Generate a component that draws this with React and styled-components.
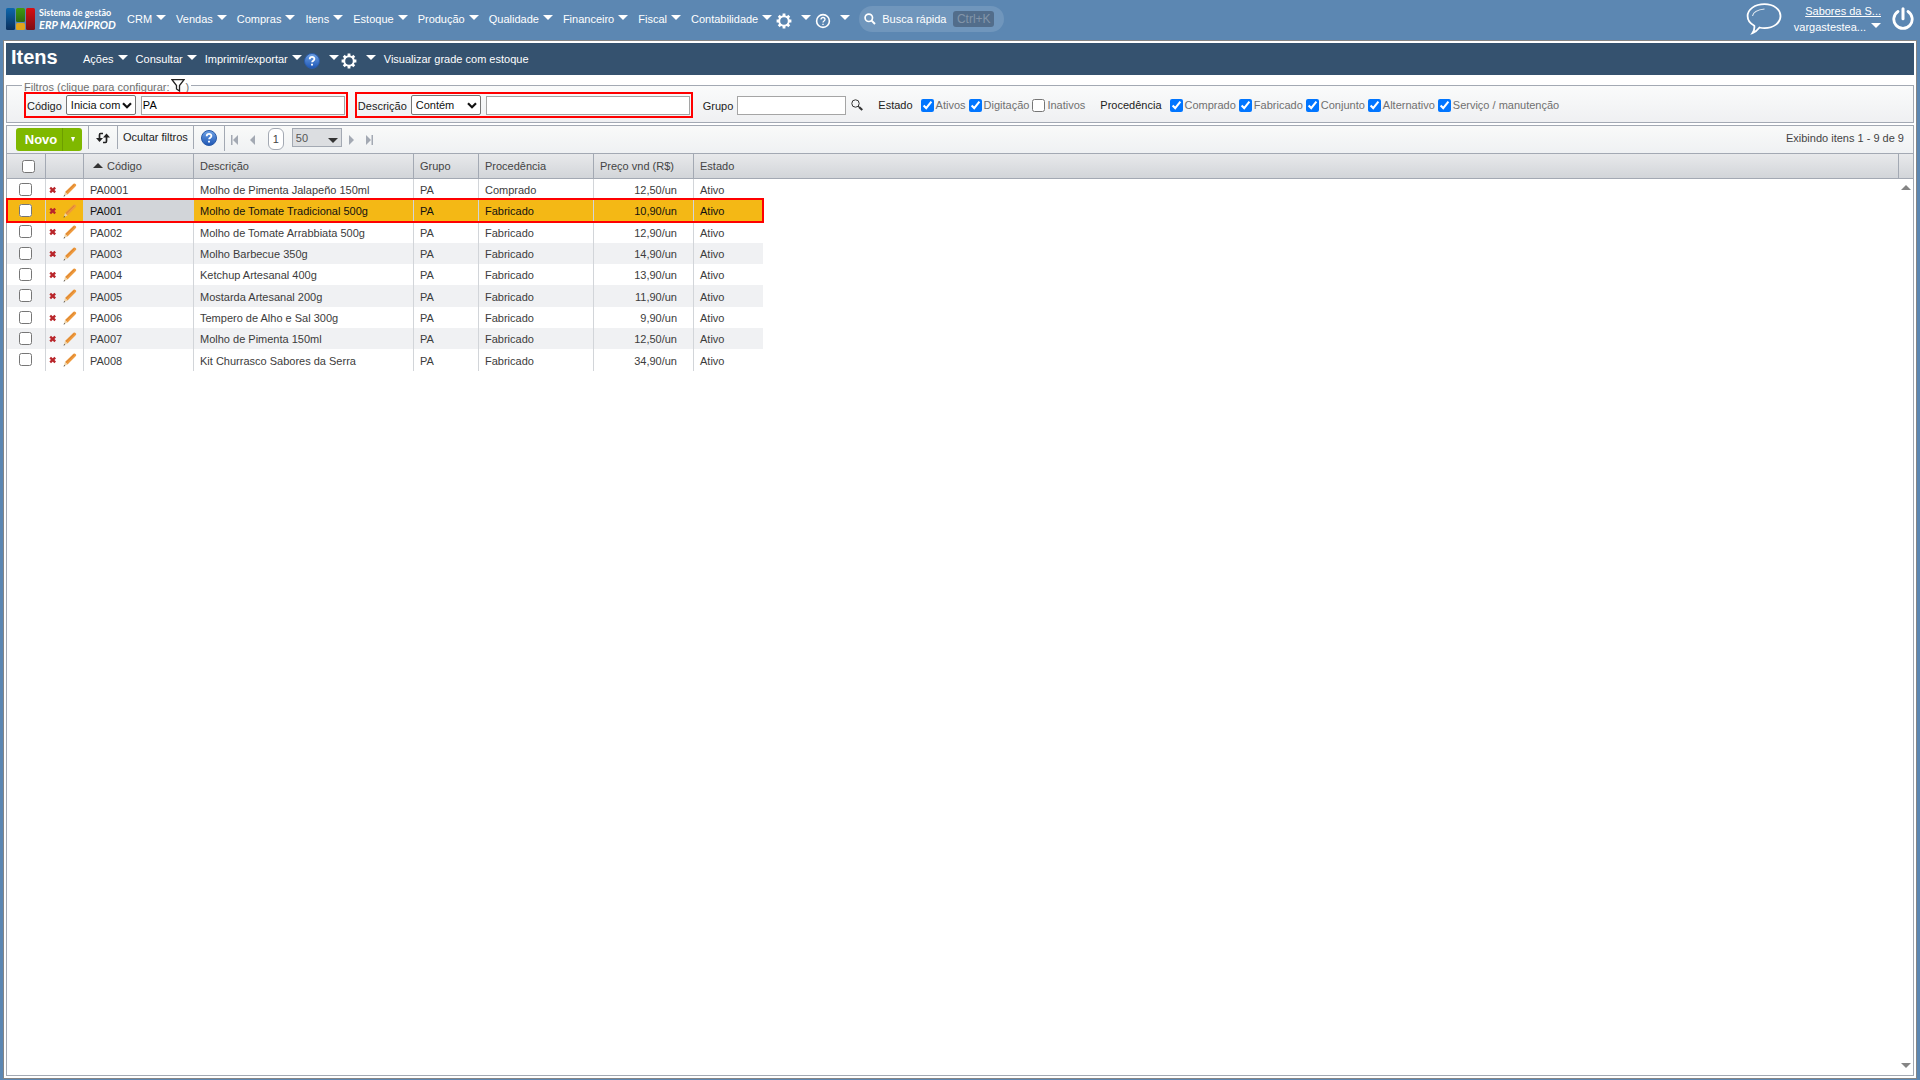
import React from 'react';
import styled, { createGlobalStyle, css } from 'styled-components';

const LINE = '#a3a9b3';

const MENU = [
  'CRM',
  'Vendas',
  'Compras',
  'Itens',
  'Estoque',
  'Produção',
  'Qualidade',
  'Financeiro',
  'Fiscal',
  'Contabilidade',
];

const ESTADOS = [
  ['Ativos', true],
  ['Digitação', true],
  ['Inativos', false],
];

const PROCEDENCIAS = [
  ['Comprado', true],
  ['Fabricado', true],
  ['Conjunto', true],
  ['Alternativo', true],
  ['Serviço / manutenção', true],
];

const ITENS = [
  ['PA0001', 'Molho de Pimenta Jalapeño 150ml', 'Comprado', '12,50/un'],
  ['PA001', 'Molho de Tomate Tradicional 500g', 'Fabricado', '10,90/un'],
  ['PA002', 'Molho de Tomate Arrabbiata 500g', 'Fabricado', '12,90/un'],
  ['PA003', 'Molho Barbecue 350g', 'Fabricado', '14,90/un'],
  ['PA004', 'Ketchup Artesanal 400g', 'Fabricado', '13,90/un'],
  ['PA005', 'Mostarda Artesanal 200g', 'Fabricado', '11,90/un'],
  ['PA006', 'Tempero de Alho e Sal 300g', 'Fabricado', '9,90/un'],
  ['PA007', 'Molho de Pimenta 150ml', 'Fabricado', '12,50/un'],
  ['PA008', 'Kit Churrasco Sabores da Serra', 'Fabricado', '34,90/un'],
];

const SELECTED = 'PA001';

const GearIcon = () => (
  <svg width="16" height="16" viewBox="0 0 16 16" aria-hidden="true">
    <g stroke="#fff" strokeWidth="2.8">
      {[0, 45, 90, 135].map((a) => (
        <path key={a} d="M8 .6v3M8 12.4v3" transform={`rotate(${a} 8 8)`} />
      ))}
    </g>
    <circle cx="8" cy="8" r="4.8" fill="none" stroke="#fff" strokeWidth="2" />
  </svg>
);

const RoundHelpIcon = () => (
  <svg width="16" height="16" viewBox="0 0 16 16" fill="none" stroke="#fff" aria-hidden="true">
    <circle cx="8" cy="8" r="6.4" strokeWidth="1.6" />
    <path d="M6 6.5c0-2.7 4-2.6 4 0 0 1.5-2 1.500-2 3" strokeWidth="1.3" />
    <path d="M8 10.7v1.4" strokeWidth="1.4" />
  </svg>
);

const BlueHelpIcon = () => (
  <svg width="16" height="16" viewBox="0 0 16 16" fill="none" aria-hidden="true">
    <defs>
      <linearGradient id="ajuda" x1="0" y1="0" x2="0" y2="1">
        <stop offset="0" stopColor="#6fa3e6" />
        <stop offset="1" stopColor="#1d55b4" />
      </linearGradient>
    </defs>
    <circle cx="8" cy="8" r="7.5" fill="url(#ajuda)" stroke="#2a5ba8" />
    <path d="M5.700 6.2c.1-3 4.700-2.900 4.700-.2 0 1.700-2.300 1.700-2.300 3.300" stroke="#fff" strokeWidth="1.8" />
    <path d="M8 10.7v1.900" stroke="#fff" strokeWidth="1.9" />
  </svg>
);

const SearchIcon = () => (
  <svg width="12" height="12" viewBox="0 0 12 12" fill="none" stroke="#fff" aria-hidden="true">
    <circle cx="4.8" cy="4.8" r="3.7" strokeWidth="1.7" />
    <path d="M7.600 7.600l3.400 3.400" strokeWidth="2" />
  </svg>
);

const LensIcon = () => (
  <svg width="12" height="12" viewBox="0 0 12 12" fill="none" stroke="#333" aria-hidden="true">
    <circle cx="4.5" cy="4.5" r="3.7" />
    <path d="M7 7l1.500 1.500" />
    <path d="M8 8l3.300 3" strokeWidth="2.2" />
  </svg>
);

const FunnelIcon = () => (
  <svg width="14" height="13" viewBox="0 0 14 13" fill="#fff" stroke="#222" aria-hidden="true">
    <path d="M1 .7h12L8.500 6.500V12L5.500 10V6.500z" strokeWidth="1.3" />
  </svg>
);

const ChevronIcon = () => (
  <svg width="10" height="7" viewBox="0 0 10 7" fill="none" stroke="#111" aria-hidden="true">
    <path d="M1 1.200l4 4 4-4" strokeWidth="2.2" />
  </svg>
);

const ChatIcon = () => (
  <svg width="36" height="32" viewBox="0 0 36 32" fill="none" stroke="#fff" aria-hidden="true">
    <path
      d="M18.500 1.200c9.200 0 16 5.200 16 11.900s-6.800 12-16 12c-2 0-3.400-.2-5-.6-2 2.600-4.300 4.700-7 5.600 1.500-2.200 2.200-4.500 1.800-7.300C4 20.600 1.600 17 1.600 13.100c0-6.700 7.200-11.900 16.900-11.900z"
      strokeWidth="1.8"
    />
    <path d="M6.500 13c.6-3.500 4.500-6.200 12-7" strokeWidth="1.2" opacity=".8" />
  </svg>
);

const PowerIcon = () => (
  <svg width="22" height="24" viewBox="0 0 22 24" fill="none" stroke="#fff" strokeLinecap="round" aria-hidden="true">
    <path d="M6 4.500A9.200 9.200 0 1 0 16 4.500" strokeWidth="2.8" />
    <path d="M11 1.700v10" strokeWidth="3" />
  </svg>
);

const RefreshIcon = () => (
  <svg width="14" height="12" viewBox="0 0 14 12" fill="none" stroke="#222" aria-hidden="true">
    <path d="M7 1.500H4.500Q3.500 1.500 3.500 3v4M7 10.500h2.500q1 0 1-1.500V5" strokeWidth="1.7" />
    <path d="M0 6h7l-3.500 4zM7 5.500h7L10.500 1.500z" fill="#222" stroke="none" />
  </svg>
);

const DeleteIcon = () => (
  <svg width="8" height="8" viewBox="0 0 8 8" stroke="#b9262b" strokeWidth="2.3" aria-hidden="true">
    <path d="M1.200 1.600l5 4.800M6.200 1.600l-5 4.800" />
  </svg>
);

const PencilIcon = () => (
  <svg width="14" height="14" viewBox="0 0 14 14" aria-hidden="true">
    <path d="M2 9L10.500.8q1-.8 2.100.2t.3 2.100L4.500 11.500z" fill="#ee9a3d" />
    <path d="M2.800 9.700L11.300 1.500" stroke="#d37a2c" strokeWidth=".8" />
    <path d="M2 9l2.500 2.500L.8 13.200z" fill="#ecd2a8" />
    <path d="M1.200 12l1 1-1.700.5z" fill="#333" />
  </svg>
);

const PagerIcon = ({ back, bar }) => (
  <svg width="8" height="10" viewBox="0 0 8 10" fill="#a3a9b3" aria-hidden="true">
    <path d={back ? 'M7 0v10L2 5z' : 'M1 0v10l5-5z'} />
    {bar && <path d={back ? 'M0 0h1.500v10H0z' : 'M6.500 0H8v10H6.500z'} />}
  </svg>
);

const LogoIcon = () => (
  <svg width="29" height="22" viewBox="0 0 29 22" aria-hidden="true">
    <defs>
      <linearGradient id="azul" x1="0" y1="0" x2="0" y2="1">
        <stop offset="0" stopColor="#0d67ad" />
        <stop offset="1" stopColor="#0a2f5c" />
      </linearGradient>
      <linearGradient id="verde" x1="0" y1="0" x2="0" y2="1">
        <stop offset="0" stopColor="#3f9a12" />
        <stop offset="1" stopColor="#2c6b10" />
      </linearGradient>
      <linearGradient id="vermelho" x1="0" y1="0" x2="0" y2="1">
        <stop offset="0" stopColor="#d80f12" />
        <stop offset="1" stopColor="#7c0f14" />
      </linearGradient>
    </defs>
    <rect width="9" height="22" rx="1.5" fill="url(#azul)" />
    <rect x="10" width="9" height="14" rx="1.5" fill="url(#verde)" />
    <rect x="10" y="15" width="9" height="7" rx="1.5" fill="#e2a51c" />
    <rect x="20" width="9" height="22" rx="1.5" fill="url(#vermelho)" />
  </svg>
);

const Check = ({ label, checked }) => (
  <CheckLabel>
    <Tick type="checkbox" defaultChecked={checked} />
    {label}
  </CheckLabel>
);

const Operator = ({ label, value }) => (
  <SelectWrap>
    <FilterSelect aria-label={label} defaultValue={value}>
      <option>Inicia com</option>
      <option>Contém</option>
    </FilterSelect>
    <ChevronIcon />
  </SelectWrap>
);

const App = () => {
  return (
    <Page>
      <GlobalStyle />
      <TopBar>
        <Brand href="#">
          <LogoIcon />
          <BrandText>
            Sistema de gestão
            <em>ERP MAXIPROD</em>
          </BrandText>
        </Brand>
        <Menu>
          {MENU.map((name) => (
            <MenuButton key={name}>
              {name}
              <Caret />
            </MenuButton>
          ))}
          <MenuButton $icon aria-label="Configurações">
            <GearIcon />
            <Caret />
          </MenuButton>
          <MenuButton $icon aria-label="Ajuda">
            <RoundHelpIcon />
            <Caret />
          </MenuButton>
        </Menu>
        <QuickSearch>
          <SearchIcon />
          <QuickInput placeholder="Busca rápida" aria-label="Busca rápida" />
          <Shortcut>Ctrl+K</Shortcut>
        </QuickSearch>
        <Account>
          <IconButton aria-label="Chat">
            <ChatIcon />
          </IconButton>
          <UserBox>
            <CompanyLink href="#">Sabores da S...</CompanyLink>
            <UserButton>
              vargastestea...
              <Caret />
            </UserButton>
          </UserBox>
          <IconButton aria-label="Sair">
            <PowerIcon />
          </IconButton>
        </Account>
      </TopBar>

      <Window>
        <TitleBar>
          <Title>Itens</Title>
          <Actions>
            <MenuButton>
              Ações
              <Caret />
            </MenuButton>
            <MenuButton>
              Consultar
              <Caret />
            </MenuButton>
            <MenuButton>
              Imprimir/exportar
              <Caret />
            </MenuButton>
            <MenuButton $icon aria-label="Ajuda">
              <BlueHelpIcon />
              <Caret />
            </MenuButton>
            <MenuButton $icon aria-label="Opções">
              <GearIcon />
              <Caret />
            </MenuButton>
            <MenuButton>Visualizar grade com estoque</MenuButton>
          </Actions>
        </TitleBar>

        <Filters>
          <FilterLegend>
            <span>Filtros (clique para configurar:</span>
            <FunnelIcon />
            <span>)</span>
          </FilterLegend>
          <FilterRow>
            <FilterBox>
              <FilterLabel htmlFor="codigo">Código</FilterLabel>
              <Operator label="Operador do código" value="Inicia com" />
              <TextInput id="codigo" defaultValue="PA" />
            </FilterBox>
            <FilterBox>
              <FilterLabel htmlFor="descricao">Descrição</FilterLabel>
              <Operator label="Operador da descrição" value="Contém" />
              <TextInput id="descricao" />
            </FilterBox>
            <GroupBox>
              <FilterLabel htmlFor="grupo">Grupo</FilterLabel>
              <TextInput id="grupo" $short />
              <IconButton aria-label="Pesquisar grupo">
                <LensIcon />
              </IconButton>
            </GroupBox>
            <CheckGroup role="group" aria-label="Estado">
              <CheckTitle>Estado</CheckTitle>
              {ESTADOS.map(([label, on]) => (
                <Check key={label} label={label} checked={on} />
              ))}
            </CheckGroup>
            <CheckGroup role="group" aria-label="Procedência">
              <CheckTitle>Procedência</CheckTitle>
              {PROCEDENCIAS.map(([label, on]) => (
                <Check key={label} label={label} checked={on} />
              ))}
            </CheckGroup>
          </FilterRow>
        </Filters>

        <Grid>
          <Toolbar>
            <NewGroup>
              <NewButton>Novo</NewButton>
              <NewButton $arrow aria-label="Mais opções">
                <DownGlyph />
              </NewButton>
            </NewGroup>
            <ToolItem>
              <IconButton aria-label="Atualizar">
                <RefreshIcon />
              </IconButton>
            </ToolItem>
            <ToolItem $tight>
              <ToolText>Ocultar filtros</ToolText>
            </ToolItem>
            <ToolItem>
              <IconButton aria-label="Ajuda">
                <BlueHelpIcon />
              </IconButton>
            </ToolItem>
            <Pager>
              <IconButton aria-label="Primeira página">
                <PagerIcon back bar />
              </IconButton>
              <IconButton aria-label="Página anterior">
                <PagerIcon back />
              </IconButton>
              <PageNumber>1</PageNumber>
              <SizeWrap>
                <SizeSelect aria-label="Itens por página" defaultValue="50">
                  <option>50</option>
                  <option>100</option>
                </SizeSelect>
                <Caret $dark />
              </SizeWrap>
              <IconButton aria-label="Próxima página">
                <PagerIcon />
              </IconButton>
              <IconButton aria-label="Última página">
                <PagerIcon bar />
              </IconButton>
            </Pager>
            <Summary>Exibindo itens 1 - 9 de 9</Summary>
          </Toolbar>

          <GridBody>
            <Table>
              <colgroup>
                {[39, 38, 110, 220, 65, 115, 100, 69].map((w, i) => (
                  <col key={i} width={w} />
                ))}
              </colgroup>
              <thead>
                <tr>
                  <HeadCell $check>
                    <Tick type="checkbox" aria-label="Selecionar todos" />
                  </HeadCell>
                  <HeadCell />
                  <HeadCell>
                    <SortMark />
                    Código
                  </HeadCell>
                  <HeadCell>Descrição</HeadCell>
                  <HeadCell>Grupo</HeadCell>
                  <HeadCell>Procedência</HeadCell>
                  <HeadCell>Preço vnd (R$)</HeadCell>
                  <HeadCell>Estado</HeadCell>
                </tr>
              </thead>
              <tbody>
                {ITENS.map(([codigo, descricao, procedencia, preco]) => (
                  <Row key={codigo} $selected={codigo === SELECTED}>
                    <Cell $check>
                      <Tick type="checkbox" aria-label={`Selecionar ${codigo}`} />
                    </Cell>
                    <Cell $tools>
                      <RowTools>
                        <IconButton aria-label="Excluir">
                          <DeleteIcon />
                        </IconButton>
                        <IconButton aria-label="Editar">
                          <PencilIcon />
                        </IconButton>
                      </RowTools>
                    </Cell>
                    <Cell $sorted={codigo === SELECTED}>{codigo}</Cell>
                    <Cell>{descricao}</Cell>
                    <Cell>PA</Cell>
                    <Cell>{procedencia}</Cell>
                    <Cell $right>{preco}</Cell>
                    <Cell>Ativo</Cell>
                  </Row>
                ))}
              </tbody>
            </Table>
            <ScrollTrack>
              <ScrollHead />
              <ScrollArrow $up />
              <ScrollArrow />
            </ScrollTrack>
          </GridBody>
        </Grid>
      </Window>
    </Page>
  );
};

const GlobalStyle = createGlobalStyle`
  body {
    margin: 0;
    background: #5c87b2;
  }
  body, button, input, select {
    font-family: 'Liberation Sans', Arial, sans-serif;
    font-size: 11px;
  }
  button {
    padding: 0;
    border: 0;
    background: none;
    color: inherit;
    cursor: pointer;
  }
`;

const Page = styled.div`
  display: flex;
  flex-direction: column;
  min-height: 100vh;
  box-sizing: border-box;
  padding-bottom: 1px;
  white-space: nowrap;
`;

const TopBar = styled.header`
  display: flex;
  align-items: center;
  height: 40px;
  padding: 0 6px 2px;
  box-sizing: border-box;
  color: #fff;
`;

const Brand = styled.a`
  display: flex;
  align-items: center;
  gap: 4px;
  width: 121px;
  color: #fff;
  text-decoration: none;
`;

const BrandText = styled.span`
  display: flex;
  flex-direction: column;
  font: bold 9px/12px Lato, sans-serif;

  em {
    font-size: 11px;
  }
`;

const Menu = styled.nav`
  display: flex;
  align-items: center;
  gap: 10px;
`;

const Caret = styled.span`
  flex: none;
  width: 0;
  height: 0;
  margin-bottom: 3px;
  border: 5px solid transparent;
  border-top-color: ${({ $dark }) => ($dark ? '#333' : '#fff')};
  border-bottom: 0;
`;

const MenuButton = styled.button`
  display: flex;
  align-items: center;
  gap: ${({ $icon }) => ($icon ? 9 : 4)}px;
  ${({ $icon }) =>
    $icon &&
    css`
      margin-left: -6px;
      svg {
        margin-top: 3px;
      }
    `}
`;

const QuickSearch = styled.label`
  display: flex;
  align-items: center;
  gap: 6px;
  height: 26px;
  width: 145px;
  margin-left: 9px;
  padding: 0 10px 0 5px;
  box-sizing: border-box;
  border-radius: 13px;
  background: #7096bc;
`;

const QuickInput = styled.input`
  flex: 1;
  min-width: 0;
  padding: 0;
  border: 0;
  background: none;
  color: #fff;
  outline: 0;

  &::placeholder {
    color: #fff;
    opacity: 1;
  }
`;

const Shortcut = styled.kbd`
  width: 41px;
  border-radius: 3px;
  background: #526d8b;
  color: #8395a9;
  font: 12px/16px 'Liberation Sans', sans-serif;
  text-align: center;
`;

const Account = styled.div`
  display: flex;
  align-items: center;
  margin-left: auto;
  gap: 11px;
`;

const IconButton = styled.button`
  display: flex;
  align-items: center;
`;

const UserBox = styled.div`
  display: flex;
  flex-direction: column;
  align-items: flex-end;
  width: 88px;
  line-height: 16px;
`;

const CompanyLink = styled.a`
  color: #fff;
`;

const UserButton = styled.button`
  display: flex;
  align-items: center;
  gap: 5px;
  line-height: 16px;
`;

const Window = styled.main`
  flex: 1;
  display: flex;
  flex-direction: column;
  margin: 0 3px;
  padding: 2px;
  border: 1px solid #858585;
  background: #fff;
`;

const TitleBar = styled.div`
  display: flex;
  align-items: center;
  height: 32px;
  margin-bottom: 4px;
  padding-left: 5px;
  background: #35526f;
  color: #fff;
`;

const Title = styled.h1`
  width: 72px;
  margin: 0;
  font-size: 20px;
  line-height: 28px;
  padding-bottom: 4px;
`;

const Actions = styled.div`
  display: flex;
  align-items: center;
  gap: 8px;
`;

const Filters = styled.fieldset`
  min-width: 0;
  margin: 0 0 2px;
  padding: 0 17px 4px;
  border: 1px solid ${LINE};
  background: linear-gradient(#fafbfb, #eff0f2);
`;

const FilterLegend = styled.legend`
  display: flex;
  align-items: center;
  gap: 1px;
  height: 13px;
  margin-left: -2px;
  padding: 0 2px;
  color: #707070;

  span {
    padding-top: 3px;
  }
`;

const FilterRow = styled.div`
  display: flex;
  align-items: center;
`;

const FilterBox = styled.div`
  display: flex;
  align-items: center;
  height: 26px;
  margin-right: 7px;
  padding-right: 1px;
  box-sizing: border-box;
  border: 2px solid #f00;
`;

const FilterLabel = styled.label`
  padding: 2px 4px 0 1px;
  color: #222;
`;

const SelectWrap = styled.span`
  display: flex;
  position: relative;
  margin-right: 5px;

  svg {
    position: absolute;
    top: 7px;
    right: 4px;
    pointer-events: none;
  }
`;

const FilterSelect = styled.select`
  appearance: none;
  width: 70px;
  height: 20px;
  padding: 0 4px;
  border: 1px solid #767676;
  border-radius: 2px;
  background: #fff;
  color: #111;
`;

const TextInput = styled.input`
  width: ${({ $short }) => ($short ? 109 : 204)}px;
  height: 19px;
  box-sizing: border-box;
  padding: 0 1px;
  border: 1px solid #a5a5a5;
`;

const GroupBox = styled.div`
  display: flex;
  align-items: center;
  margin-left: 2px;

  svg {
    margin-left: 5px;
  }
`;

const CheckGroup = styled.div`
  display: flex;
  align-items: center;
  gap: 3px;
  margin-left: 15px;
`;

const CheckTitle = styled.span`
  margin-right: 5px;
  color: #222;
`;

const CheckLabel = styled.label`
  display: flex;
  align-items: center;
  gap: 2px;
  color: #707070;
`;

const Tick = styled.input`
  width: 13px;
  height: 13px;
  margin: 0;
`;

const Grid = styled.section`
  flex: 1;
  display: flex;
  flex-direction: column;
  border: 1px solid ${LINE};
`;

const Toolbar = styled.div`
  display: flex;
  height: 27px;
  padding-left: 9px;
  border-bottom: 1px solid ${LINE};
  background: linear-gradient(#f9faf9, #eff1f3);
`;

const NewGroup = styled.div`
  display: flex;
  height: 23px;
  margin: 2px 6px 0 0;
  border-radius: 3px;
  overflow: hidden;
  background: #7fb800;
`;

const NewButton = styled.button`
  width: ${({ $arrow }) => ($arrow ? 20 : 46)}px;
  padding-left: ${({ $arrow }) => ($arrow ? 0 : 4)}px;
  ${({ $arrow }) => $arrow && 'border-left: 1px solid #6d9e00;'}
  color: #fff;
  font-size: 13px;
  font-weight: bold;
`;

const DownGlyph = styled.span`
  display: block;
  width: 0;
  margin: 0 auto;
  border: 2px solid transparent;
  border-top: 5px solid #fff;
  border-bottom: 0;
`;

const ToolItem = styled.div`
  display: flex;
  align-items: center;
  height: 23px;
  padding: 0 ${({ $tight }) => ($tight ? 5 : 7)}px;
  border-left: 1px solid ${LINE};
`;

const ToolText = styled.button`
  padding-bottom: 2px;
  color: #222;
`;

const Pager = styled(ToolItem)`
  gap: 9px;
  padding: 2px 6px 0;
`;

const PageNumber = styled.span`
  width: 14px;
  margin: 0 -3px 2px 3px;
  border: 1px solid ${LINE};
  border-radius: 6px;
  background: #fff;
  color: #444;
  line-height: 20px;
  text-align: center;
`;

const SizeWrap = styled.span`
  display: flex;
  position: relative;
  margin: 0 -3px 4px 2px;

  span {
    position: absolute;
    top: 10px;
    right: 4px;
    pointer-events: none;
  }
`;

const SizeSelect = styled.select`
  appearance: none;
  width: 50px;
  height: 19px;
  padding: 0 3px;
  border: 1px solid ${LINE};
  border-radius: 0;
  background: #dcdee1;
  color: #555;
`;

const Summary = styled.span`
  margin-left: auto;
  padding: 0 9px 3px;
  align-self: center;
  color: #444;
`;

/* the header strip runs the whole width, past the last column */
const GridBody = styled.div`
  flex: 1;
  display: flex;
  justify-content: space-between;
  background:
    linear-gradient(${LINE}, ${LINE}) 0 24px / 100% 1px no-repeat,
    linear-gradient(#e8e9eb, #d2d5d9) 0 0 / 100% 24px no-repeat;
`;

const Table = styled.table`
  table-layout: fixed;
  width: 756px;
  align-self: flex-start;
  border-collapse: separate;
  border-spacing: 0;
`;

const HeadCell = styled.th`
  height: 24px;
  padding: 0 6px 1px;
  ${({ $check }) => $check && 'padding: 0 0 1px 15px;'}
  box-sizing: content-box;
  border-right: 1px solid ${LINE};
  color: #444;
  font-weight: normal;
  text-align: left;

  &:last-child {
    border-right: 0;
  }

  input {
    display: block;
  }
`;

const SortMark = styled.span`
  display: inline-block;
  margin: 0 4px 2px 3px;
  border: 5px solid transparent;
  border-top: 0;
  border-bottom-color: #333;
`;

const Cell = styled.td`
  padding: 1px 6px 0;
  border-right: 1px solid #d2d5d9;
  line-height: 14px;
  ${({ $check }) => $check && 'padding: 0 0 1px 12px;'}
  ${({ $tools }) => $tools && 'padding: 0 0 0 3px;'}
  ${({ $right }) => $right && 'padding-right: 16px; text-align: right;'}
  ${({ $sorted }) => $sorted && 'background: #d2d5d9;'}

  &:last-child {
    border-right: 0;
  }

  > input {
    display: block;
  }
`;

const Row = styled.tr`
  height: 21px;
  color: #3c3c3c;

  &:nth-child(3n) {
    height: 22px;
  }

  &:nth-child(even) {
    background: #f0f1f3;
  }

  ${({ $selected }) =>
    $selected &&
    css`
      position: relative;
      color: #111;

      &:nth-child(n) {
        background: #f4b815;
      }

      &::after {
        content: '';
        position: absolute;
        inset: -2px -1px;
        border: 2px solid #f00;
        pointer-events: none;
      }
    `}
`;

const RowTools = styled.div`
  display: flex;
  align-items: center;
  gap: 6px;
`;

const ScrollTrack = styled.div`
  display: flex;
  flex-direction: column;
  align-items: center;
  width: 15px;
`;

const ScrollHead = styled.div`
  align-self: stretch;
  height: 24px;
  border-left: 1px solid ${LINE};
`;

const ScrollArrow = styled.span`
  border: 5px solid transparent;
  ${({ $up }) =>
    $up
      ? 'margin-top: 7px; border-top: 0; border-bottom-color: #858585;'
      : 'margin: auto 0 7px; border-bottom: 0; border-top-color: #858585;'}
`;

export default App;
